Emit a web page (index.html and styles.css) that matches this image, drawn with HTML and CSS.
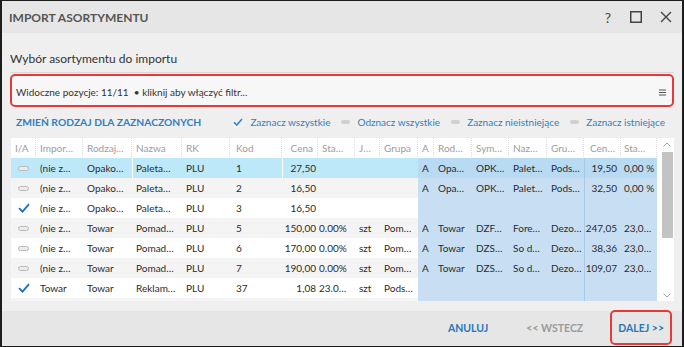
FILE: index.html
```html
<!DOCTYPE html>
<html lang="pl">
<head>
<meta charset="utf-8">
<title>Import asortymentu</title>
<link rel="stylesheet" href="styles.css">
</head>
<body>
<div class="window">
  <header class="titlebar">
    <span class="title">IMPORT ASORTYMENTU</span>
    <div class="win-btns">
      <span class="help">?</span>
      <svg class="max" width="12" height="12" viewBox="0 0 12 12"><rect x="0.75" y="0.75" width="10.5" height="10.5" fill="none" stroke="#444" stroke-width="1.5"/></svg>
      <svg class="close" width="12" height="12" viewBox="0 0 12 12"><path d="M1 1L11 11M11 1L1 11" stroke="#444" stroke-width="1.4" fill="none"/></svg>
    </div>
  </header>

  <main class="content">
    <h1 class="heading">Wybór asortymentu do importu</h1>

    <div class="filter-wrap">
      <div class="filter">
        <span class="filter-text">Widoczne pozycje: 11/11 &nbsp;• kliknij aby włączyć filtr...</span>
        <svg class="menu" width="7" height="7" viewBox="0 0 7 7"><path d="M0 1h7M0 3.5h7M0 6h7" stroke="#555" stroke-width="1.2"/></svg>
      </div>
    </div>

    <div class="toolbar">
      <span class="change">ZMIEŃ RODZAJ DLA ZAZNACZONYCH</span>
      <div class="links">
        <span class="link"><svg class="ico" width="10" height="8" viewBox="0 0 10 8"><path d="M1 4.2L3.8 7L9 1" stroke="#2f7fc1" stroke-width="1.5" fill="none"/></svg>Zaznacz wszystkie</span>
        <span class="link"><span class="pill"></span>Odznacz wszystkie</span>
        <span class="link"><span class="pill"></span>Zaznacz nieistniejące</span>
        <span class="link"><span class="pill"></span>Zaznacz istniejące</span>
      </div>
    </div>

    <div class="grid">
      <div class="grid-body">
        <table class="data">
          <colgroup>
            <col class="w25"><col class="w47"><col class="w49"><col class="w50"><col class="w48">
            <col class="w52"><col class="w36"><col class="w37"><col class="w25"><col class="w38">
            <col class="w16"><col class="w38"><col class="w37"><col class="w38"><col class="w37">
            <col class="w37"><col class="w36">
          </colgroup>
          <thead>
            <tr>
              <th class="ia">I/A</th><th>Impor…</th><th>Rodzaj…</th><th>Nazwa</th><th>RK</th>
              <th class="kod">Kod</th><th class="num">Cena</th><th class="sta">Sta…</th><th>J…</th><th>Grupa</th>
              <th>A</th><th>Rod…</th><th>Sym…</th><th>Naz…</th><th>Gru…</th><th class="cen-h">Cen…</th><th class="sta2">Sta…</th>
            </tr>
          </thead>
          <tbody>
            <tr class="sel">
              <td class="ia"><span class="dash"></span></td><td>(nie z…</td><td>Opako…</td><td class="vl">Paleta…</td><td>PLU</td>
              <td class="kod">1</td><td class="num vl">27,50</td><td class="sta"></td><td></td><td></td>
              <td class="b">A</td><td class="b">Opa…</td><td class="b">OPK…</td><td class="b">Palet…</td><td class="b">Pods…</td><td class="b num2 sep">19,50</td><td class="b sta2">0,00 %</td>
            </tr>
            <tr class="alt">
              <td class="ia"><span class="dash"></span></td><td>(nie z…</td><td>Opako…</td><td>Paleta…</td><td>PLU</td>
              <td class="kod">2</td><td class="num">16,50</td><td class="sta"></td><td></td><td></td>
              <td class="b">A</td><td class="b">Opa…</td><td class="b">OPK…</td><td class="b">Palet…</td><td class="b">Pods…</td><td class="b num2 sep">32,50</td><td class="b sta2">0,00 %</td>
            </tr>
            <tr>
              <td class="ia"><span class="check"></span></td><td>(nie z…</td><td>Opako…</td><td>Paleta…</td><td>PLU</td>
              <td class="kod">3</td><td class="num">16,50</td><td class="sta"></td><td></td><td></td>
              <td class="b"></td><td class="b"></td><td class="b"></td><td class="b"></td><td class="b"></td><td class="b num2 sep"></td><td class="b sta2"></td>
            </tr>
            <tr class="alt">
              <td class="ia"><span class="dash"></span></td><td>(nie z…</td><td>Towar</td><td>Pomad…</td><td>PLU</td>
              <td class="kod">5</td><td class="num">150,00</td><td class="sta">0.00%</td><td>szt</td><td>Pom…</td>
              <td class="b">A</td><td class="b">Towar</td><td class="b">DZF…</td><td class="b">Fore…</td><td class="b">Dezo…</td><td class="b num2 sep">247,05</td><td class="b sta2">23,0…</td>
            </tr>
            <tr>
              <td class="ia"><span class="dash"></span></td><td>(nie z…</td><td>Towar</td><td>Pomad…</td><td>PLU</td>
              <td class="kod">6</td><td class="num">170,00</td><td class="sta">0.00%</td><td>szt</td><td>Pom…</td>
              <td class="b">A</td><td class="b">Towar</td><td class="b">DZS…</td><td class="b">So d…</td><td class="b">Dezo…</td><td class="b num2 sep">38,36</td><td class="b sta2">23,0…</td>
            </tr>
            <tr class="alt">
              <td class="ia"><span class="dash"></span></td><td>(nie z…</td><td>Towar</td><td>Pomad…</td><td>PLU</td>
              <td class="kod">7</td><td class="num">190,00</td><td class="sta">0.00%</td><td>szt</td><td>Pom…</td>
              <td class="b">A</td><td class="b">Towar</td><td class="b">DZS…</td><td class="b">So d…</td><td class="b">Dezo…</td><td class="b num2 sep">109,07</td><td class="b sta2">23,0…</td>
            </tr>
            <tr>
              <td class="ia"><span class="check"></span></td><td>Towar</td><td>Towar</td><td>Reklam…</td><td>PLU</td>
              <td class="kod">37</td><td class="num">1,08</td><td class="sta">23.0…</td><td>szt</td><td>Pods…</td>
              <td class="b"></td><td class="b"></td><td class="b"></td><td class="b"></td><td class="b"></td><td class="b num2 sep"></td><td class="b sta2"></td>
            </tr>
            <tr class="alt">
              <td class="ia"></td><td></td><td></td><td></td><td></td>
              <td class="kod"></td><td class="num"></td><td class="sta"></td><td></td><td></td>
              <td class="b"></td><td class="b"></td><td class="b"></td><td class="b"></td><td class="b"></td><td class="b num2 sep"></td><td class="b sta2"></td>
            </tr>
          </tbody>
        </table>
      </div>
      <div class="scrollbar">
        <svg class="arrow" width="8" height="5" viewBox="0 0 8 5"><path d="M0.5 4.5L4 1L7.5 4.5" stroke="#a0a0a0" stroke-width="1" fill="none"/></svg>
        <div class="thumb"></div>
        <div class="track"></div>
        <svg class="arrow" width="8" height="5" viewBox="0 0 8 5"><path d="M0.5 0.5L4 4L7.5 0.5" stroke="#a0a0a0" stroke-width="1" fill="none"/></svg>
      </div>
    </div>
  </main>

  <footer class="footer">
    <button class="btn primary">ANULUJ</button>
    <button class="btn disabled">&lt;&lt; WSTECZ</button>
    <button class="btn primary next">DALEJ &gt;&gt;</button>
  </footer>
</div>
</body>
</html>
```

FILE: styles.css
```css
* { box-sizing: border-box; }
html, body { margin: 0; padding: 0; }
body {
  width: 684px;
  height: 347px;
  overflow: hidden;
  background: #fff;
  font-family: "Segoe UI", Lato, "Open Sans", sans-serif;
  color: #333;
}

.window {
  width: 684px;
  height: 347px;
  border: 2px solid #1c1c1c;
  border-top-width: 1px;
  display: flex;
  flex-direction: column;
  background: #efefef;
}

/* title bar */
.titlebar {
  flex: none;
  height: 32px;
  background: #e6e6e6;
  display: flex;
  align-items: center;
  justify-content: space-between;
  padding: 0 10px 0 7px;
}
.title {
  font-size: 12px;
  font-weight: 700;
  color: #555;
}
.win-btns {
  display: flex;
  align-items: center;
}
.help {
  font-size: 14px;
  color: #444;
  margin-right: 19px;
}
.max { margin-right: 18px; }

/* content */
.content {
  flex: 1;
  display: flex;
  flex-direction: column;
  padding: 17px 8px 0 8px;
}
.heading {
  margin: 0;
  font-size: 12px;
  font-weight: 400;
  line-height: 18px;
  color: #333;
}

.filter-wrap {
  margin-top: 4px;
  border-top: 1px solid #d9d9d9;
  padding-top: 1px;
}
.filter {
  height: 33px;
  background: #f7f7f7;
  border: 2px solid #e5393a;
  border-radius: 5px;
  display: flex;
  align-items: center;
  justify-content: space-between;
  padding: 3px 6px 0 4px;
  font-size: 10px;
  color: #333;
  white-space: nowrap;
}

.toolbar {
  display: flex;
  align-items: center;
  height: 28px;
  padding: 1px 9px 0 6px;
  white-space: nowrap;
}
.change {
  font-size: 10.3px;
  font-weight: 700;
  color: #2f7fc1;
}
.links {
  margin-left: auto;
  display: flex;
  align-items: center;
  gap: 11px;
}
.link {
  display: flex;
  align-items: center;
  gap: 7px;
  font-size: 10px;
  color: #2f7fc1;
}
.pill {
  display: inline-block;
  width: 9px;
  height: 4px;
  border-radius: 2px;
  background: #d0d0d0;
}

/* grid */
.grid {
  margin: 3px 0 0 1px;
  height: 163px;
  background: #fff;
  display: flex;
}
.grid-body {
  width: 646px;
  height: 163px;
  overflow: hidden;
}
.data {
  table-layout: fixed;
  width: 646px;
  border-collapse: separate;
  border-spacing: 0;
  font-size: 10px;
}
.w16 { width: 16px; } .w25 { width: 25px; } .w36 { width: 36px; } .w37 { width: 37px; }
.w38 { width: 38px; } .w47 { width: 47px; } .w48 { width: 48px; } .w49 { width: 49px; }
.w50 { width: 50px; } .w52 { width: 52px; }

.data th, .data td {
  height: 20px;
  padding: 0 0 0 4px;
  white-space: nowrap;
  overflow: hidden;
  text-align: left;
  line-height: 20px;
}
.data th {
  font-weight: 400;
  color: #9c9c9c;
  background: #fff linear-gradient(#dcdcdc 50%, transparent 50%) right top / 1px 2px repeat-y;
}
.data td { color: #2b2b2b; }
.data th.num { text-align: right; padding: 0 5px 0 0; }
.data td.num { text-align: right; padding: 0 2px 0 0; }
.data td.sta { padding-left: 1px; }
.data th.sta { padding-left: 4px; }
.data .kod { padding-left: 6px; }
.data .cen-h { padding-left: 6px; }
.data td.num2 { text-align: right; padding: 0 4px 0 0; }
.data .sta2 { padding-left: 3px; }

.data tr.alt td { background: #f4f4f4; }
.data tr.sel td { background: #bde8f9; }
.data tr.sel td.vl { box-shadow: inset 1px 0 #fff; }
.data td.b, .data tr.alt td.b { background: #c8dff3; }
.data tr.sel td.b { background: #b9daf3; }
.data td.sep { box-shadow: inset 1px 0 #a9c8e6; }

.data td.ia { padding-left: 7px; }
.dash {
  display: block;
  width: 11px;
  height: 5px;
  border: 1px solid #b8b8b8;
  border-radius: 3px;
  background: #ececec;
}
.check {
  display: block;
  width: 12px;
  height: 10px;
  background: url("data:image/svg+xml;utf8,<svg xmlns='http://www.w3.org/2000/svg' width='12' height='10' viewBox='0 0 12 10'><path d='M1 5.2L4.5 8.6L11 1.2' stroke='%231c6fc4' stroke-width='1.8' fill='none'/></svg>") no-repeat;
}

.scrollbar {
  width: 17px;
  height: 163px;
  display: flex;
  flex-direction: column;
  align-items: center;
  padding: 4px 2px 3px 3px;
}
.arrow { flex: none; margin-left: 2px; }
.thumb {
  flex: none;
  width: 11px;
  height: 86px;
  margin-top: 5px;
  margin-left: 3px;
  background: #c3c3c3;
}
.track { flex: 1; }

/* footer */
.footer {
  flex: none;
  height: 35px;
  margin-top: 10px;
  background: #e6e6e6;
  display: flex;
  justify-content: flex-end;
  align-items: center;
  padding-right: 10px;
}
.btn {
  font-family: inherit;
  font-size: 10.5px;
  font-weight: 700;
  background: none;
  border: 2px solid transparent;
  padding: 0 6px;
  height: 35px;
  margin-top: -2px;
  white-space: nowrap;
}
.primary { color: #2a78b8; }
.disabled { color: #9a9a9a; margin: -2px 19px 0 22px; }
.next {
  border-color: #e5393a;
  border-radius: 5px;
}
```
